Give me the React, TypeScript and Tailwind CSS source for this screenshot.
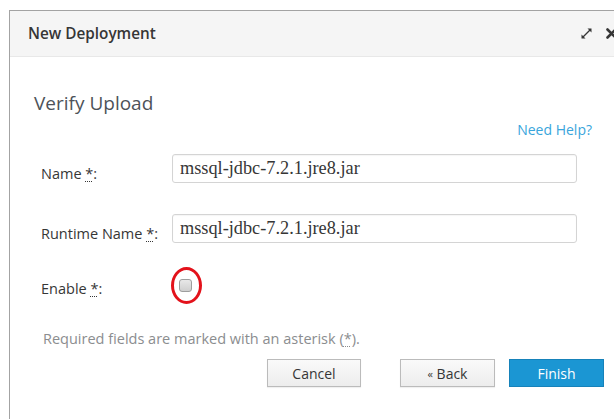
import React from "react";

const ui = { fontFamily: '"Open Sans", "Liberation Sans", sans-serif' };
const serif = { fontFamily: '"Liberation Serif", "Times New Roman", serif' };

function Req() {
  return (
    <>
      {" "}
      <abbr title="required" className="no-underline">
        <span className="underline decoration-dotted decoration-1 underline-offset-2">*</span>
      </abbr>
      :
    </>
  );
}

function ExpandIcon() {
  return (
    <svg width="13" height="13" viewBox="0 0 13 13" className="text-[#363636]">
      <path d="M2.5 10.5 L10.5 2.5" stroke="currentColor" strokeWidth="1.3" />
      <path d="M7.5 1.5 H11.5 V5.5 Z" fill="currentColor" />
      <path d="M1.5 7.5 V11.5 H5.5 Z" fill="currentColor" />
    </svg>
  );
}

function CloseIcon() {
  return (
    <svg width="11" height="11" viewBox="0 0 11 11" className="text-[#363636]">
      <path d="M1.5 1.5 L9.5 9.5 M9.5 1.5 L1.5 9.5" stroke="currentColor" strokeWidth="2.6" strokeLinecap="round" />
    </svg>
  );
}

function TextField({ value }: { value: string }) {
  return (
    <div
      className="h-[29px] flex items-center pl-[7px] border border-[#d4d4d4] rounded-[3px] bg-white text-[18.3px] text-[#363636] shadow-[inset_0_1px_1px_rgba(0,0,0,0.04)]"
      style={serif}
    >
      {value}
    </div>
  );
}

export default function App() {
  return (
    <div className="w-[614px] h-[419px] overflow-hidden bg-white" style={ui}>
      <div className="ml-[9px] mt-[10px] w-[620px] h-[430px] border border-[#a3a3a3] bg-white">
        {/* dialog header */}
        <div className="h-[46px] flex items-center bg-[#f5f5f5] border-b border-[#e8e8e8] pl-[18px] pr-[11px]">
          <span className="text-[15.3px] font-semibold text-[#363636]">New Deployment</span>
          <div className="ml-auto flex items-center gap-[13px]">
            <ExpandIcon />
            <CloseIcon />
          </div>
        </div>

        {/* dialog body */}
        <div className="pl-[24px] w-[582px]">
          <h2 className="mt-[33px] text-[19px] leading-[26px] font-normal text-[#4d5258]">Verify Upload</h2>
          <div className="mt-[3px] text-right leading-[20px]">
            <a className="text-[14px] text-[#39a5dc]">Need Help?</a>
          </div>

          <div className="ml-[7px] mr-[15px] mt-[14px] text-[14.5px] text-[#363636]">
            <div className="grid grid-cols-[131px_1fr]">
              <label className="pt-[10px] leading-[20px]">
                Name<Req />
              </label>
              <TextField value="mssql-jdbc-7.2.1.jre8.jar" />
            </div>
            <div className="grid grid-cols-[131px_1fr] mt-[30px]">
              <label className="pt-[10px] leading-[20px]">
                Runtime Name<Req />
              </label>
              <TextField value="mssql-jdbc-7.2.1.jre8.jar" />
            </div>
            <div className="grid grid-cols-[131px_1fr] mt-[25px]">
              <label className="pt-[10px] leading-[20px]">
                Enable<Req />
              </label>
              <div className="pt-[10px] pl-[7px]">
                <div className="relative w-[13px] h-[13px]">
                  <div className="w-[13px] h-[13px] rounded-[3px] border border-[#9e9e9e] bg-gradient-to-b from-[#e8e8e8] to-[#cfcfcf]" />
                  <div className="absolute left-[-8px] top-[-12px] w-[31px] h-[37px] rounded-[50%] border-[3px] border-[#e3121b]" />
                </div>
              </div>
            </div>
          </div>

          <p className="mt-[30px] ml-[9px] text-[14.5px] leading-[20px] text-[#8b8d8f]">
            Required fields are marked with an asterisk (
            <span className="underline decoration-dotted decoration-1 underline-offset-2">*</span>).
          </p>
        </div>

        <div className="mt-[10px] pl-[257px] flex items-center text-[14px]">
          <button className="w-[94px] h-[28px] border border-[#bbbbbb] bg-gradient-to-b from-[#fafafa] to-[#ededed] text-[#363636] shadow-[0_1px_1px_rgba(0,0,0,0.06)]">
            Cancel
          </button>
          <button className="ml-[39px] w-[95px] h-[28px] border border-[#bbbbbb] bg-gradient-to-b from-[#fafafa] to-[#ededed] text-[#363636] shadow-[0_1px_1px_rgba(0,0,0,0.06)]">
            <span className="text-[11px] align-[1px]">«</span> Back
          </button>
          <button className="ml-[14px] w-[95px] h-[28px] border border-[#1682ba] bg-[#1b96d3] text-white">
            Finish
          </button>
        </div>
      </div>
    </div>
  );
}
